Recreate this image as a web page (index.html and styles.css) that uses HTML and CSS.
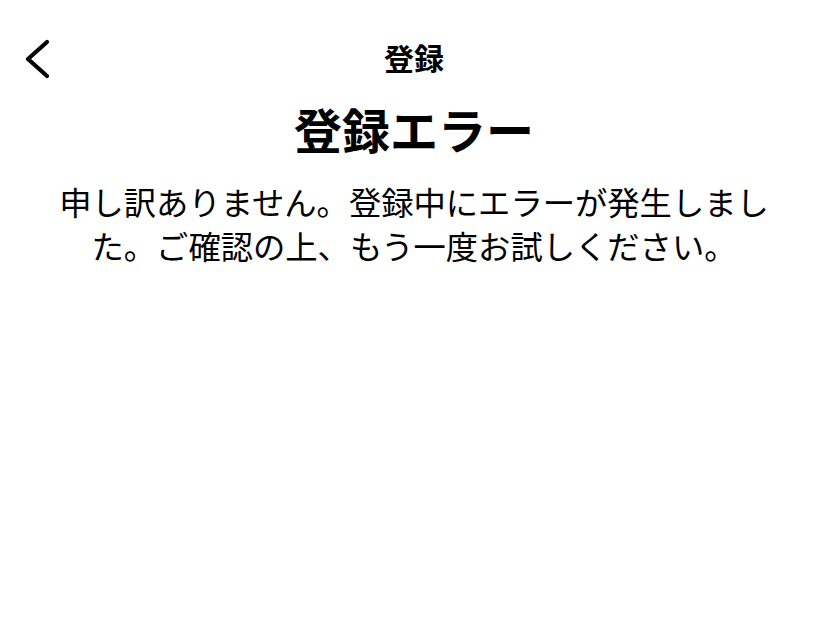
FILE: index.html
```html
<!DOCTYPE html>
<html lang="ja">
<head>
<meta charset="utf-8">
<link rel="stylesheet" href="styles.css">
</head>
<body>
<header class="nav">
  <button class="back" aria-label="戻る">
    <svg width="32" height="44" viewBox="0 0 32 44"><path d="M25 5 L6 22 L25 39" fill="none" stroke="#000" stroke-width="4.2" stroke-linecap="round" stroke-linejoin="round"/></svg>
  </button>
  <div class="nav-title">登録</div>
  <div class="nav-spacer"></div>
</header>
<main class="content">
  <h1 class="heading">登録エラー</h1>
  <p class="message">申し訳ありません。登録中にエラーが発生しました。ご確認の上、もう一度お試しください。</p>
</main>
</body>
</html>
```
FILE: styles.css
```css
html, body {
  margin: 0;
  padding: 0;
  background: #fff;
  color: #000;
  font-family: "Noto Sans CJK JP", "Noto Sans", sans-serif;
}
.nav {
  display: grid;
  grid-template-columns: 100px 1fr 100px;
  align-items: center;
  height: 48px;
  margin-top: 35px;
}
.back {
  background: none;
  border: 0;
  padding: 0 0 0 22px;
  display: flex;
  align-items: center;
  height: 48px;
  cursor: pointer;
}
.nav-title {
  text-align: center;
  font-size: 30px;
  font-weight: 700;
  line-height: 44px;
  margin-top: -4px;
}
.content {
  padding: 0 54px;
  text-align: center;
}
.heading {
  margin: 15px 0 0;
  font-size: 48px;
  font-weight: 700;
  line-height: 60px;
}
.message {
  margin: 21px 0 0;
  font-size: 32.3px;
  line-height: 44px;
  font-weight: 400;
}
```
